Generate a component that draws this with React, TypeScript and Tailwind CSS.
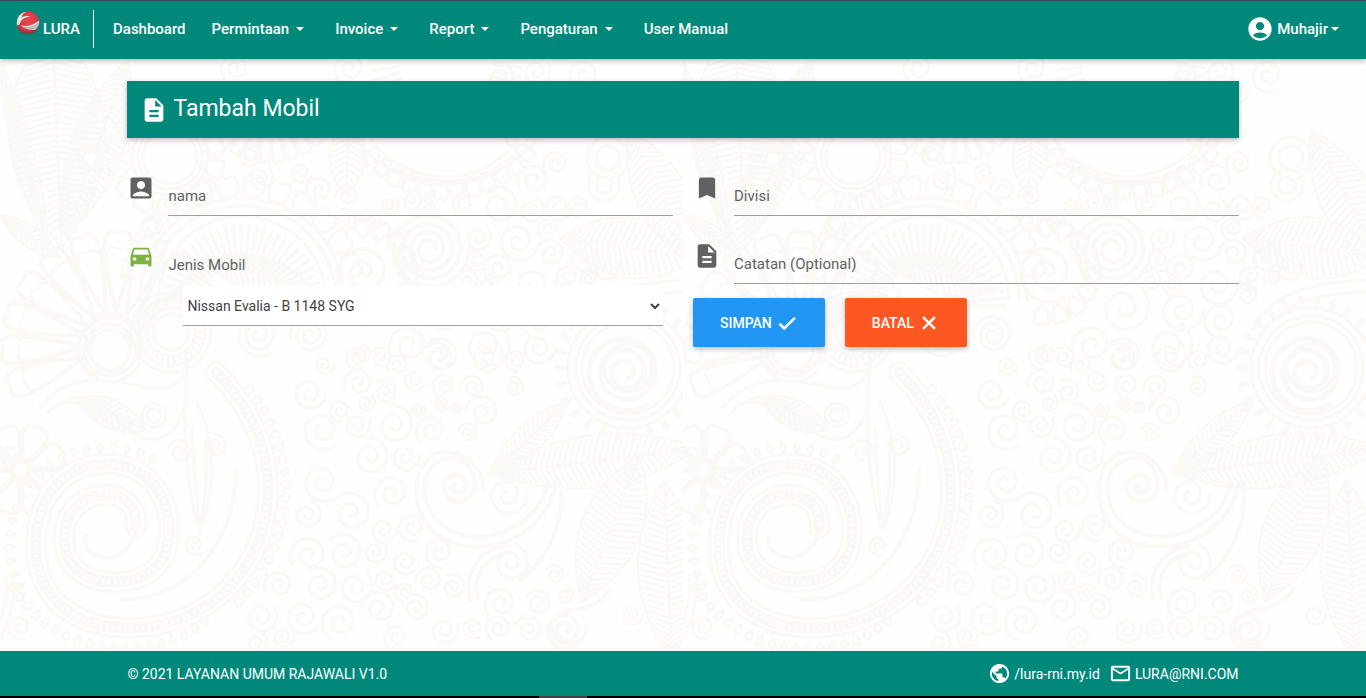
import type { ReactNode } from "react";
import {
  MdAccountBox,
  MdAccountCircle,
  MdBookmark,
  MdDescription,
  MdDirectionsCar,
  MdMailOutline,
  MdPublic,
} from "react-icons/md";

const INK = "#faf9f6";

/* Small curls of the batik background: x, y, radius */
const CURLS: [number, number, number][] = [
  [324, 365, 9], [357, 357, 11], [398, 365, 10], [438, 358, 14], [486, 357, 16],
  [309, 393, 15], [340, 410, 10], [359, 383, 13], [385, 392, 11], [366, 403, 8],
  [414, 380, 10], [444, 385, 11], [473, 387, 11], [514, 387, 9], [418, 410, 7],
  [442, 403, 7], [457, 408, 6], [483, 412, 15], [394, 425, 18], [357, 425, 12],
  [322, 430, 18], [431, 430, 14], [468, 433, 9], [370, 457, 17], [405, 457, 13],
  [322, 482, 17], [392, 493, 16], [351, 513, 19], [307, 515, 13], [383, 530, 12],
  [412, 527, 13], [309, 555, 17], [344, 553, 17], [375, 552, 11], [405, 562, 12],
  [440, 552, 14], [279, 585, 13], [320, 585, 16], [355, 587, 16], [385, 580, 10],
  [405, 592, 9], [429, 580, 12], [453, 587, 11], [261, 617, 15], [303, 617, 16],
  [340, 622, 17], [379, 608, 16], [416, 608, 12], [444, 630, 13], [473, 628, 10],
  [499, 628, 12], [529, 630, 13], [257, 643, 10], [283, 637, 10], [396, 637, 12],
  [501, 603, 15], [538, 603, 12], [510, 563, 17], [507, 495, 18], [20, 627, 11],
  [534, 180, 15], [499, 206, 18], [531, 210, 12], [558, 206, 13], [579, 206, 10],
  [556, 163, 11], [411, 201, 10], [389, 206, 9], [428, 200, 8], [463, 203, 10],
  [371, 221, 11], [345, 221, 11], [478, 238, 12], [518, 241, 18], [549, 228, 10],
  [551, 253, 13], [581, 258, 14], [606, 268, 12], [476, 260, 10], [499, 268, 14],
  [468, 281, 10], [488, 286, 10], [534, 285, 19], [568, 276, 11], [589, 278, 8],
  [564, 295, 10], [441, 308, 24], [498, 310, 20], [538, 320, 17], [409, 345, 18],
  [441, 356, 16], [486, 346, 22], [538, 348, 15], [516, 360, 10], [363, 355, 9],
  [381, 358, 10], [260, 178, 12], [301, 172, 10], [320, 190, 13], [347, 196, 10],
  [500, 78, 13], [536, 72, 13], [528, 100, 10], [556, 95, 11], [500, 110, 12],
  [545, 122, 12], [515, 135, 12], [585, 75, 16], [350, 68, 14], [180, 452, 11],
  [215, 446, 10], [10, 455, 10], [195, 545, 9], [235, 68, 13], [555, 575, 9],
  [565, 595, 8], [632, 615, 9],
];

function curl(x: number, y: number, r: number, turns = 2, start = 0) {
  const steps = Math.round(turns * 18);
  let d = "";
  for (let i = 0; i <= steps; i++) {
    const k = i / steps;
    const a = start + k * turns * Math.PI * 2;
    const q = r * (1 - k * 0.84);
    d += `${i ? "L" : "M"}${(x + q * Math.cos(a)).toFixed(1)} ${(y + q * Math.sin(a)).toFixed(1)}`;
  }
  return d;
}

/* A leaf whose midrib runs from (x1,y1) to (x2,y2), hatched on both sides */
function leaf(x1: number, y1: number, x2: number, y2: number, w: number) {
  const dx = x2 - x1;
  const dy = y2 - y1;
  const len = Math.hypot(dx, dy);
  const ux = dx / len;
  const uy = dy / len;
  const nx = -uy;
  const ny = ux;
  const at = (t: number, o: number) =>
    `${(x1 + ux * t + nx * o).toFixed(1)} ${(y1 + uy * t + ny * o).toFixed(1)}`;
  let d = `M${at(0, 0)}Q${at(len / 2, w * 2)} ${at(len, 0)}Q${at(len / 2, -w * 2)} ${at(0, 0)}M${at(0, 0)}L${at(len, 0)}`;
  for (let t = 6; t < len - 12; t += 6) {
    const k = (t + 8) / len;
    const o = 4 * w * k * (1 - k) - 3;
    if (o > 2) d += `M${at(t, 0)}L${at(t + 8, o)}M${at(t, 0)}L${at(t + 8, -o)}`;
  }
  return d;
}

function petals(x: number, y: number, r1: number, r2: number, from: number, to: number, n: number) {
  let d = "";
  const step = (to - from) / n;
  for (let i = 0; i < n; i++) {
    const a = from + step * (i + 0.5);
    const p = (r: number, s: number) =>
      `${(x + r * Math.cos(a + s)).toFixed(1)} ${(y + r * Math.sin(a + s)).toFixed(1)}`;
    d += `M${p(r1, 0)}C${p(r2 * 0.8, -step * 0.55)} ${p(r2 * 1.1, -step * 0.5)} ${p(r2, 0)}C${p(r2 * 1.1, step * 0.5)} ${p(r2 * 0.8, step * 0.55)} ${p(r1, 0)}`;
  }
  return d;
}

/* Small separate drops standing on a circle */
function beads(x: number, y: number, r: number, from: number, to: number, n: number) {
  let d = "";
  for (let i = 0; i <= n; i++) {
    const a = from + ((to - from) * i) / n;
    const p = (q: number, s: number) =>
      `${(x + q * Math.cos(a + s)).toFixed(1)} ${(y + q * Math.sin(a + s)).toFixed(1)}`;
    d += `M${p(r, 0)}Q${p(r + 8, -0.05)} ${p(r + 10, 0)}Q${p(r + 8, 0.05)} ${p(r, 0)}`;
  }
  return d;
}

function rays(x: number, y: number, r1: number, r2: number, from: number, to: number, n: number) {
  let d = "";
  for (let i = 0; i <= n; i++) {
    const a = from + ((to - from) * i) / n;
    d += `M${(x + r1 * Math.cos(a)).toFixed(1)} ${(y + r1 * Math.sin(a)).toFixed(1)}L${(x + r2 * Math.cos(a)).toFixed(1)} ${(y + r2 * Math.sin(a)).toFixed(1)}`;
  }
  return d;
}

/* A beaded double line: wide ink, paper core, dotted centre */
function Band({ d, w = 16 }: { d: string; w?: number }) {
  return (
    <>
      <path d={d} strokeWidth={w + 6} />
      <path d={d} strokeWidth={w} stroke="#fefefe" />
      <path d={d} strokeWidth={w - 5} />
      <path d={d} strokeWidth={w - 11} stroke="#fefefe" strokeDasharray="2 4" strokeLinecap="butt" />
    </>
  );
}

function Rings({ x, y, radii }: { x: number; y: number; radii: number[] }) {
  return (
    <>
      {radii.map((r, i) => (
        <circle key={r} cx={x} cy={y} r={r} fill={i ? "none" : "#fefefe"} />
      ))}
    </>
  );
}

function Batik() {
  return (
    <svg className="absolute inset-0 -z-10 size-full" aria-hidden="true">
      <defs>
        <pattern id="batik" width="683" height="698" patternUnits="userSpaceOnUse">
          <rect width="683" height="698" fill="#fefefe" />
          <g fill="none" stroke={INK} strokeWidth="3" strokeLinecap="round" strokeLinejoin="round">
            {CURLS.map(([x, y, r], i) => (
              <path key={i} d={curl(x, y, r * 1.15, 1.7, i * 1.3)} />
            ))}

            <g strokeWidth="2.5">
              <path d={leaf(52, 20, 62, 248, 48)} />
              <path d={leaf(128, 60, 66, 235, 26)} />
              <path d={leaf(0, 60, 48, 250, 10)} />
              <path d={leaf(0, 215, 60, 258, 10)} />
              <path d={leaf(560, 238, 700, 258, 30)} />
              <path d={leaf(628, 130, 700, 268, 26)} />
              <path d={leaf(350, 120, 345, 195, 18)} />
            </g>

            <path d={petals(115, 345, 34, 112, 2.6, 5.9, 10)} strokeWidth="4" />
            <path d={petals(115, 345, 30, 96, 2.6, 5.9, 10)} strokeWidth="2" />
            <path d={curl(112, 345, 36, 3, 2)} strokeWidth="4" />

            <path d={petals(166, 157, 36, 58, 0, 6.28, 14)} />
            <Rings x={170} y={157} radii={[27, 32, 38]} />
            <Rings x={90} y={158} radii={[7, 12]} />
            <Rings x={152} y={225} radii={[6, 10]} />
            <Rings x={250} y={155} radii={[6, 11]} />

            <path d={rays(242, 305, 40, 80, 3.1, 6.3, 32)} />
            <path d="M140 300a102 102 0 0 1 204 0M148 300a94 94 0 0 1 188 0M158 300a84 84 0 0 1 168 0" />
            <path d={petals(242, 300, 104, 122, 3.3, 6.1, 12)} />
            <path d={leaf(205, 260, 315, 290, 18)} />
            <Rings x={171} y={332} radii={[18, 24, 34, 40]} />
            <path d={rays(171, 332, 26, 33, 0, 6.28, 30)} />
            <path d={curl(258, 335, 22, 2.5, 1)} />
            <path d={curl(310, 335, 20, 2.5, 3)} />

            <path d="M355 138a110 110 0 0 0 180 0M345 128a122 122 0 0 0 202 0M370 138a92 92 0 0 0 150 0" />
            <path d={petals(447, 90, 92, 108, 0.6, 2.5, 12)} />
            <path d={rays(447, 60, 50, 75, 0.1, 3, 24)} />
            <path d={petals(270, 90, 30, 72, 0.3, 2.8, 12)} />
            <Rings x={608} y={158} radii={[12, 21]} />
            <Rings x={604} y={185} radii={[8, 16]} />

            <path d={curl(429, 249, 40, 4, 0)} strokeWidth="4" />
            <path d={petals(364, 272, 34, 52, -1.8, 1.9, 9)} strokeWidth="4" />
            <path d={curl(364, 272, 31, 2, 1)} strokeWidth="4" />

            <Rings x={628} y={368} radii={[24, 46, 52, 60]} />
            <path d={curl(625, 372, 40, 3, 1)} strokeWidth="5" />
            <path d={beads(626, 368, 62, 0, 6.28, 26)} />
            <path d="M570 330C590 290 630 282 690 280M578 336C600 300 640 292 690 292" />

            <path d="M40 407C70 370 110 380 150 388C175 390 188 380 186 350M48 412C80 384 100 400 122 424C150 452 178 440 186 400M60 404C90 396 100 420 124 434" />
            <path d={leaf(78, 398, 145, 430, 14)} />
            <Rings x={110} y={350} radii={[20, 26, 32]} />
            <Rings x={154} y={415} radii={[7, 12]} />
            <path d={petals(21, 470, 7, 45, 0, 6.28, 8)} strokeWidth="4" />
            <Rings x={21} y={470} radii={[8]} />
            <path d="M188 360C180 430 188 500 200 530C216 490 216 440 196 400M192 430C194 470 196 500 200 530M206 440C208 470 206 500 200 530" />

            <Band d="M216 372C246 402 268 440 268 490C268 568 208 628 130 628C74 628 36 598 36 546C36 494 66 464 107 464C146 464 169 494 169 530C169 564 148 582 114 582C84 582 64 566 64 538C64 512 82 495 106 495C128 495 138 510 136 528" />
            <path d="M136 528C134 546 122 556 108 558C92 556 82 548 86 536M236 470C236 540 190 600 120 600" strokeWidth="4" />
            <path d={beads(124, 520, 124, 0.9, 2.6, 18)} />
            <path d={beads(130, 490, 150, -0.7, 0.8, 18)} />
            <path d={beads(107, 545, 92, 2.7, 5.2, 18)} />

            <path
              d="M483 490C486 450 418 430 416 490C416 530 450 552 490 546C530 538 552 510 556 482M474 484C474 448 426 450 424 488C426 520 452 540 488 536C524 528 544 506 548 482"
              strokeWidth="4"
            />
            <path d={curl(457, 486, 18, 1.6, 0)} strokeWidth="5" />
            <g strokeWidth="2.5">
              <path d={leaf(490, 475, 570, 400, 14)} />
              <path d={leaf(492, 474, 700, 448, 26)} />
              <path d={leaf(582, 602, 640, 455, 30)} />
              <path d={leaf(672, 660, 664, 480, 30)} />
            </g>
            <path d="M470 600C464 570 480 550 505 546M478 598C472 575 486 556 510 552M560 482C566 520 548 560 520 580M610 590C590 620 560 600 552 625C548 650 590 650 586 625" strokeWidth="4" />
            <path d={curl(565, 630, 20, 2, 1)} strokeWidth="4" />
            <path d="M0 640C14 610 16 590 12 570M0 620C8 600 8 590 6 576" />
          </g>
        </pattern>
        <radialGradient id="globe" cx="0.5" cy="0.35" r="0.7">
          <stop offset="0" stopColor="#f0454d" />
          <stop offset="0.6" stopColor="#d93a43" />
          <stop offset="1" stopColor="#7d2a32" />
        </radialGradient>
        <linearGradient id="silver" x1="0" y1="0" x2="1" y2="1">
          <stop offset="0" stopColor="#ffffff" />
          <stop offset="1" stopColor="#a9c4c4" />
        </linearGradient>
      </defs>
      <rect width="100%" height="100%" fill="url(#batik)" />
    </svg>
  );
}

function Logo() {
  return (
    <svg viewBox="0 0 24 24" className="mb-3 size-6" aria-hidden="true">
      <circle cx="12" cy="12" r="11.3" fill="url(#globe)" />
      <path d="M1 14.500C0 7 4 1.500 10.500.8C7 2.300 5.300 4.500 5.800 6.500C8 5 12 4.600 15.500 5.600C10 5.600 6 8 4.700 11C4 12.500 3.500 14 1 14.500Z" fill="url(#silver)" />
      <path d="M5 14.500C11 16 17.500 14 23.200 9.500C23.600 13 22.300 16.500 19.500 18.700C14 19.500 9 18 5 14.500Z" fill="url(#silver)" />
      <path d="M6.500 16C12 17.800 18 16 23 12.500M9.500 17.800C14 18.700 18.500 17.500 22 15.500" fill="none" stroke="#c07a82" strokeWidth="0.6" />
    </svg>
  );
}

function Caret() {
  return (
    <svg viewBox="0 0 8 4" className="h-1 w-2" aria-hidden="true">
      <path d="M0 0h8L4 4z" fill="currentColor" />
    </svg>
  );
}

function ButtonIcon({ d }: { d: string }) {
  return (
    <svg viewBox="0 0 24 24" className="size-[22px]" aria-hidden="true">
      <path d={d} fill="none" stroke="currentColor" strokeWidth="2.8" />
    </svg>
  );
}

const NAV = [
  { label: "Dashboard", menu: false },
  { label: "Permintaan", menu: true },
  { label: "Invoice", menu: true },
  { label: "Report", menu: true },
  { label: "Pengaturan", menu: true },
  { label: "User Manual", menu: false },
];

function Header() {
  return (
    <header className="flex h-[59px] items-center border-t border-[#37474f] bg-[#00897b] pr-[27px] pb-[2px] pl-4 text-[15px] font-medium text-white shadow-[0_2px_5px_rgba(0,0,0,0.26)]">
      <a href="#" className="flex items-center gap-[3px]">
        <Logo />
        <span>LURA</span>
      </a>
      <nav className="ml-[13px] flex h-[38px] flex-1 items-center border-l border-white pl-[6px]">
        {NAV.map(({ label, menu }) =>
          menu ? (
            <button key={label} type="button" className="flex items-center gap-[7px] pr-[18px] pl-[13px]">
              {label}
              <Caret />
            </button>
          ) : (
            <a key={label} href="#" className="px-[13px]">
              {label}
            </a>
          ),
        )}
      </nav>
      <button type="button" className="flex items-center gap-[3px]">
        <MdAccountCircle className="size-7" />
        Muhajir
        <Caret />
      </button>
    </header>
  );
}

function Field({ id, label, icon }: { id: string; label: string; icon: ReactNode }) {
  return (
    <div className="flex h-[42px] gap-[13px] text-[#616161]">
      {icon}
      <div className="grid flex-1">
        <label htmlFor={id} className="col-start-1 row-start-1 mt-3 text-[15px] leading-5">
          {label}
        </label>
        <input
          id={id}
          type="text"
          className="col-start-1 row-start-1 h-[42px] w-full border-b border-[#9e9e9e] bg-transparent outline-none"
        />
      </div>
    </div>
  );
}

const BUTTON =
  "flex h-[49px] items-center gap-1 rounded-[2px] px-[27px] text-sm font-medium text-white shadow-[0_2px_5px_rgba(0,0,0,0.26)]";

export default function App() {
  return (
    <div className="relative isolate flex min-h-screen flex-col font-[Roboto,sans-serif]">
      <Batik />
      <Header />

      <main className="mx-auto w-[85%] flex-1 px-[25px] pt-[22px]">
        <h1 className="flex h-[57px] items-center gap-[5px] bg-[#00897b] px-[13px] text-[23px] text-white shadow-[0_2px_5px_rgba(0,0,0,0.26)]">
          <MdDescription className="size-7" />
          Tambah Mobil
        </h1>

        <form className="mt-9 grid grid-cols-2 gap-5">
          <div className="flex flex-col">
            <Field id="nama" label="nama" icon={<MdAccountBox className="size-7" />} />
            <div className="mt-[26px] flex h-[42px] gap-[13px]">
              <MdDirectionsCar className="size-7 text-[#7cb342]" />
              <label htmlFor="mobil" className="mt-[13px] text-[15px] leading-5 text-[#616161]">
                Jenis Mobil
              </label>
            </div>
            <select
              id="mobil"
              className="mt-[2px] mr-[10px] ml-14 h-10 border-b border-[#9e9e9e] bg-white text-sm text-[#424242] outline-none"
            >
              <option>Nissan Evalia - B 1148 SYG</option>
            </select>
          </div>

          <div className="flex flex-col">
            <Field id="divisi" label="Divisi" icon={<MdBookmark className="size-7" />} />
            <div className="mt-[26px]">
              <Field id="catatan" label="Catatan (Optional)" icon={<MdDescription className="size-7" />} />
            </div>
            <div className="mt-[14px] flex gap-5">
              <button type="submit" className={`${BUTTON} bg-[#2196f3]`}>
                SIMPAN
                <ButtonIcon d="M3.800 12.800L9 18L20.600 6.400" />
              </button>
              <button type="button" className={`${BUTTON} bg-[#ff5722]`}>
                BATAL
                <ButtonIcon d="M5.500 5.500L18.500 18.500M18.500 5.500L5.500 18.500" />
              </button>
            </div>
          </div>
        </form>
      </main>

      <footer className="bg-[#00897b] text-sm text-white">
        <div className="mx-auto flex h-[45px] w-[85%] items-center justify-between px-[25px]">
          <span>© 2021 LAYANAN UMUM RAJAWALI V1.0</span>
          <div className="flex items-center gap-[9px]">
            <a href="#" className="flex items-center gap-[3px]">
              <MdPublic className="size-[23px]" />
              /lura-rni.my.id
            </a>
            <a href="#" className="flex items-center gap-[3px]">
              <MdMailOutline className="size-[23px]" />
              LURA@RNI.COM
            </a>
          </div>
        </div>
        <div className="flex h-[2px] justify-center bg-black">
          <div className="mr-[240px] w-12 bg-[#424242]" />
        </div>
      </footer>
    </div>
  );
}
